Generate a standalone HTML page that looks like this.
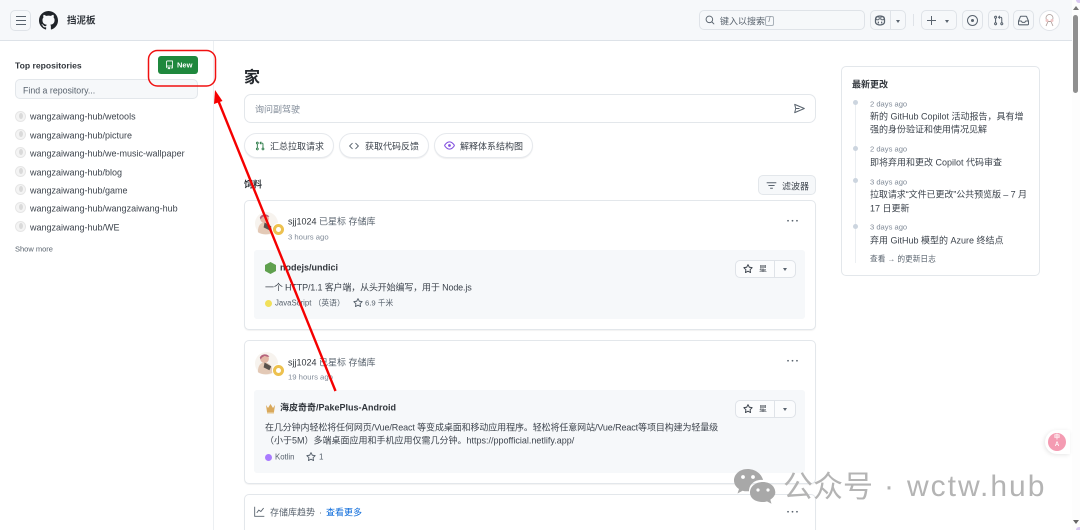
<!DOCTYPE html>
<html lang="zh"><head><meta charset="utf-8"><title>GitHub</title>
<style>
html,body{margin:0;padding:0;width:1080px;height:530px;overflow:hidden;background:#fff}
body{position:relative;font-family:"Liberation Sans","Noto Sans CJK SC",sans-serif;color:#1f2328;font-size:9px;filter:blur(.3px)}
.a{position:absolute;white-space:nowrap}
.t{position:absolute;white-space:nowrap;line-height:14px;transform:translateY(-6.5px)}
.b{position:absolute;box-sizing:border-box;border:1px solid #d9dee3;border-radius:5px}
svg{position:absolute;fill:currentColor;overflow:visible}
.m{color:#59636e}.g{color:#818b98}.k{color:#3d444d}
.card{position:absolute;box-sizing:border-box;left:244px;width:572px;border:1px solid #e3e7eb;border-radius:5px;box-shadow:0 1px 1px rgba(31,35,40,.06);background:#fff}
.inner{position:absolute;left:254px;width:551px;background:#f6f8fa;border-radius:3px}
.pill{position:absolute;box-sizing:border-box;top:133px;height:25px;border:1px solid #e6e9ed;border-radius:13px;box-shadow:0 1px 1px rgba(31,35,40,.07);background:#fff}
.fav{position:absolute;left:15px;width:11px;height:11px;border-radius:50%;background:#f4f4f4;border:1px solid #e6e6e6;box-sizing:border-box}
.fav:after{content:"";position:absolute;left:2.5px;top:1px;width:4px;height:6px;border-radius:50%;background:#dadada}
.dot{position:absolute;left:853px;width:5px;height:5px;border-radius:50%;background:#ccd5df}
.badge{position:absolute;width:11px;height:11px;border-radius:50%;background:#edc14f;border:1px solid #fff;box-sizing:content-box;margin:-1px}
.badge:after{content:"";position:absolute;left:3px;top:3px;width:5px;height:5px;background:#fff;border-radius:50%}
</style></head><body>
<svg width="0" height="0" style="position:absolute"><defs>
<symbol id="star" viewBox="0 0 16 16"><path d="M8 .25a.75.75 0 0 1 .673.418l1.882 3.815 4.21.612a.75.75 0 0 1 .416 1.279l-3.046 2.97.719 4.192a.751.751 0 0 1-1.088.791L8 12.347l-3.766 1.98a.75.75 0 0 1-1.088-.79l.72-4.194L.818 6.374a.75.75 0 0 1 .416-1.28l4.21-.611L7.327.668A.75.75 0 0 1 8 .25Zm0 2.445L6.615 5.5a.75.75 0 0 1-.564.41l-3.097.45 2.24 2.184a.75.75 0 0 1 .216.664l-.528 3.084 2.769-1.456a.75.75 0 0 1 .698 0l2.77 1.456-.53-3.084a.75.75 0 0 1 .216-.664l2.24-2.183-3.096-.45a.75.75 0 0 1-.564-.41L8 2.694Z"/></symbol>
<symbol id="pr" viewBox="0 0 16 16"><path d="M1.5 3.25a2.25 2.25 0 1 1 3 2.122v5.256a2.251 2.251 0 1 1-1.5 0V5.372A2.25 2.25 0 0 1 1.5 3.25Zm5.677-.177L9.573.677A.25.25 0 0 1 10 .854V2.5h1A2.5 2.5 0 0 1 13.5 5v5.628a2.251 2.251 0 1 1-1.5 0V5a1 1 0 0 0-1-1h-1v1.646a.25.25 0 0 1-.427.177L7.177 3.427a.25.25 0 0 1 0-.354ZM3.75 2.5a.75.75 0 1 0 0 1.5.75.75 0 0 0 0-1.5Zm0 9.5a.75.75 0 1 0 0 1.5.75.75 0 0 0 0-1.5Zm8.25.75a.75.75 0 1 0 1.5 0 .75.75 0 0 0-1.5 0Z"/></symbol>
<symbol id="avatar" viewBox="0 0 24 24"><circle cx="12" cy="12" r="12" fill="#f7f3ee"/><circle cx="10" cy="7" r="4.5" fill="#e3b8a6"/><path d="M5 6c1-4 8-5 10-1l-2 0-3-1-3 2-1 2Z" fill="#b5627c"/><path d="M3 21c0-7 3-10 7-10s8 3 9 10c-4 3-12 3-16 0Z" fill="#e3c9b6"/><path d="M10 11l7 4-2 4-6-3Z" fill="#5a524c"/></symbol>
<symbol id="dots" viewBox="0 0 16 4"><circle cx="2.500" cy="2" r="1.100"/><circle cx="8" cy="2" r="1.100"/><circle cx="13.500" cy="2" r="1.100"/></symbol>
</defs></svg>

<!-- header -->
<div class="a" style="left:0;top:0;width:1072px;height:41px;background:#f6f8fa;border-bottom:1px solid #dde2e8;box-sizing:border-box"></div>
<div class="b" style="left:10px;top:10px;width:21px;height:21px;border-color:#dfe3e8"></div>
<div class="a" style="left:15.5px;top:16px;width:10px;height:1.2px;background:#59636e;box-shadow:0 4px 0 #59636e,0 8px 0 #59636e"></div>
<svg style="left:39px;top:11px;color:#1f2328" width="19" height="19" viewBox="0 0 16 16"><path d="M8 0c4.42 0 8 3.58 8 8a8.013 8.013 0 0 1-5.45 7.59c-.4.08-.55-.17-.55-.38 0-.27.01-1.13.01-2.2 0-.75-.25-1.23-.54-1.48 1.78-.2 3.65-.88 3.65-3.95 0-.88-.31-1.59-.82-2.15.08-.2.36-1.02-.08-2.12 0 0-.67-.22-2.2.82-.64-.18-1.32-.27-2-.27-.68 0-1.36.09-2 .27-1.53-1.03-2.2-.82-2.2-.82-.44 1.1-.16 1.92-.08 2.12-.51.56-.82 1.28-.82 2.15 0 3.06 1.86 3.75 3.64 3.95-.23.2-.44.55-.51 1.07-.46.21-1.61.55-2.33-.66-.15-.24-.6-.83-1.23-.82-.67.01-.27.38.01.53.34.19.73.9.82 1.13.16.45.68 1.31 2.69.94 0 .67.01 1.3.01 1.49 0 .21-.15.45-.55.37A7.995 7.995 0 0 1 0 8c0-4.42 3.58-8 8-8Z"/></svg>
<div class="t" style="left:67px;top:20.500px;font-size:9.500px;font-weight:700;color:#31363c">挡泥板</div>

<div class="b" style="left:699px;top:10px;width:166px;height:20px;border-color:#dfe3e8"></div>
<svg style="left:705px;top:15px;color:#59636e" width="10" height="10" viewBox="0 0 16 16"><path d="M10.68 11.74a6 6 0 0 1-7.922-8.982 6 6 0 0 1 8.982 7.922l3.04 3.04a.749.749 0 0 1-.326 1.275.749.749 0 0 1-.734-.215ZM11.5 7a4.499 4.499 0 1 0-8.997 0A4.499 4.499 0 0 0 11.5 7Z"/></svg>
<div class="t m" style="left:720px;top:20.500px">键入以搜索</div>
<div class="a m" style="left:765px;top:16px;width:9px;height:10px;border:1px solid #aab2ba;border-radius:2px;box-sizing:border-box;font-size:7px;line-height:8px;text-align:center">/</div>

<div class="b" style="left:870px;top:10px;width:36px;height:20px;border-color:#dfe3e8"></div>
<div class="a" style="left:890px;top:10px;width:1px;height:20px;background:#dfe3e8"></div>
<svg style="left:874px;top:14.500px;color:#59636e" width="12" height="11" viewBox="0 0 16 14"><path d="M2 9V6c0-3 2-5 6-5s6 2 6 5v3c0 2.500-3 4-6 4S2 11.500 2 9Z" fill="none" stroke="currentColor" stroke-width="1.700"/><rect x="2.500" y="2" width="4.500" height="4" rx="1.500" fill="none" stroke="currentColor" stroke-width="1.300"/><rect x="9" y="2" width="4.500" height="4" rx="1.500" fill="none" stroke="currentColor" stroke-width="1.300"/><rect x="5" y="8.500" width="1.600" height="2.400"/><rect x="9.400" y="8.500" width="1.600" height="2.400"/></svg>
<div class="a" style="left:896px;top:19.500px;border:2.500px solid transparent;border-top:3px solid #59636e"></div>
<div class="a" style="left:913px;top:14px;width:1px;height:12px;background:#dfe3e8"></div>

<div class="b" style="left:921px;top:10px;width:36px;height:20px;border-color:#dfe3e8"></div>
<div class="a" style="left:927px;top:20px;width:9px;height:1.200px;background:#59636e"></div>
<div class="a" style="left:931px;top:16px;width:1.200px;height:9px;background:#59636e"></div>
<div class="a" style="left:945px;top:19.500px;border:2.500px solid transparent;border-top:3px solid #59636e"></div>

<div class="b" style="left:962px;top:10px;width:21px;height:20px;border-color:#dfe3e8"></div>
<div class="a" style="left:967px;top:15px;width:11px;height:11px;box-sizing:border-box;border:1.200px solid #59636e;border-radius:50%"></div>
<div class="a" style="left:971px;top:19px;width:3px;height:3px;background:#59636e;border-radius:50%"></div>
<div class="b" style="left:988px;top:10px;width:21px;height:20px;border-color:#dfe3e8"></div>
<svg style="left:993px;top:15px;color:#59636e" width="11" height="11"><use href="#pr"/></svg>
<div class="b" style="left:1013px;top:10px;width:21px;height:20px;border-color:#dfe3e8"></div>
<svg style="left:1018px;top:15px;color:#59636e" width="11" height="11" viewBox="0 0 16 16"><path d="M2.8 2.06A1.75 1.75 0 0 1 4.41 1h7.18c.7 0 1.333.417 1.61 1.06l2.74 6.395c.04.093.06.194.06.295v4.5A1.75 1.75 0 0 1 14.25 15H1.75A1.75 1.75 0 0 1 0 13.25v-4.5c0-.101.02-.202.06-.295Zm1.61.44a.25.25 0 0 0-.23.152L1.887 8H4.75a.75.75 0 0 1 .6.3L6.625 10h2.75l1.275-1.7a.75.75 0 0 1 .6-.3h2.863L11.82 2.652a.25.25 0 0 0-.23-.152Zm10.09 7h-2.875l-1.275 1.7a.75.75 0 0 1-.6.3h-3.5a.75.75 0 0 1-.6-.3L4.375 9.5H1.5v3.750c0 .138.112.25.25.25h12.5a.25.25 0 0 0 .25-.25Z"/></svg>
<svg style="left:1039px;top:10px" width="21" height="21" viewBox="0 0 21 21"><circle cx="10.500" cy="10.500" r="10" fill="#fff" stroke="#dfe3e8"/><circle cx="10.500" cy="8" r="3.500" fill="none" stroke="#a89a96" stroke-width=".8"/><path d="M7 16l2-4.500h3l2 4.500" fill="none" stroke="#a89a96" stroke-width=".8"/><circle cx="8" cy="10.500" r="1.500" fill="#f0c8c8"/><circle cx="13" cy="10.500" r="1.500" fill="#f0c8c8"/></svg>

<!-- sidebar -->
<div class="a" style="left:213px;top:41px;width:1px;height:489px;background:#eceff2"></div>
<div class="t" style="left:15px;top:65px;font-size:8.600px;font-weight:700;color:#31363c">Top repositories</div>
<div class="a" style="left:158px;top:56px;width:40px;height:18px;background:#1f883d;border-radius:3px"></div>
<svg style="left:165px;top:60px;color:#fff" width="9" height="10" viewBox="0 0 16 16"><path d="M2 2.500A2.500 2.500 0 0 1 4.500 0h8.750a.75.75 0 0 1 .75.75v12.500a.75.75 0 0 1-.75.75h-2.500a.75.75 0 0 1 0-1.500h1.750v-2h-8a1 1 0 0 0-.714 1.700.75.75 0 1 1-1.072 1.050A2.495 2.495 0 0 1 2 11.500Zm10.500-1h-8a1 1 0 0 0-1 1v6.708A2.486 2.486 0 0 1 4.500 9h8ZM5 12.250a.25.25 0 0 1 .25-.25h3.500a.25.25 0 0 1 .25.25v3.250a.25.25 0 0 1-.4.2l-1.450-1.087a.249.249 0 0 0-.3 0L5.400 15.700a.25.25 0 0 1-.4-.2Z"/></svg>
<div class="t" style="left:177px;top:64.500px;font-size:7.500px;font-weight:700;color:#fff">New</div>
<div class="b" style="left:15px;top:79px;width:183px;height:20px;background:#f6f8fa;border-color:#e3e7eb"></div>
<div class="t m" style="left:23px;top:89.500px;font-size:8.800px">Find a repository...</div>

<div class="fav" style="top:110.500px"></div><div class="t k" style="left:30px;top:116px">wangzaiwang-hub/wetools</div>
<div class="fav" style="top:128.500px"></div><div class="t k" style="left:30px;top:134.500px">wangzaiwang-hub/picture</div>
<div class="fav" style="top:147px"></div><div class="t k" style="left:30px;top:153px">wangzaiwang-hub/we-music-wallpaper</div>
<div class="fav" style="top:165.500px"></div><div class="t k" style="left:30px;top:171.500px">wangzaiwang-hub/blog</div>
<div class="fav" style="top:184px"></div><div class="t k" style="left:30px;top:190px">wangzaiwang-hub/game</div>
<div class="fav" style="top:202px"></div><div class="t k" style="left:30px;top:208px">wangzaiwang-hub/wangzaiwang-hub</div>
<div class="fav" style="top:220.500px"></div><div class="t k" style="left:30px;top:226.500px">wangzaiwang-hub/WE</div>
<div class="t m" style="left:15px;top:249px;font-size:7.500px">Show more</div>

<!-- main top -->
<div class="t" style="left:244px;top:78px;font-size:16px;font-weight:700;color:#262a2f">家</div>
<div class="b" style="left:244px;top:94px;width:572px;height:29px;border-color:#e3e7eb;border-radius:7px"></div>
<div class="t g" style="left:255px;top:108.500px">询问副驾驶</div>
<svg style="left:794px;top:103px;color:#59636e" width="11" height="11" viewBox="0 0 16 16"><path d="M1 2l14 6-14 6 1.500-6L1 2Zm1.500 6H8" fill="none" stroke="currentColor" stroke-width="1.400" stroke-linejoin="round"/></svg>

<div class="pill" style="left:244px;width:90px"></div>
<svg style="left:255px;top:141px;color:#2f7d4a" width="10" height="10"><use href="#pr"/></svg>
<div class="t k" style="left:270px;top:145.500px">汇总拉取请求</div>
<div class="pill" style="left:339px;width:90px"></div>
<svg style="left:349px;top:141px;color:#59636e" width="10" height="10" viewBox="0 0 16 16"><path d="m11.280 3.220 4.250 4.250a.75.75 0 0 1 0 1.060l-4.250 4.250a.749.749 0 0 1-1.275-.326.749.749 0 0 1 .215-.734L13.940 8l-3.720-3.720a.749.749 0 0 1 .326-1.275.749.749 0 0 1 .734.215Zm-6.560 0a.751.751 0 0 1 1.042.018.751.751 0 0 1 .018 1.042L2.060 8l3.720 3.720a.749.749 0 0 1-.326 1.275.749.749 0 0 1-.734-.215L.470 8.530a.75.75 0 0 1 0-1.060Z"/></svg>
<div class="t k" style="left:365px;top:145.500px">获取代码反馈</div>
<div class="pill" style="left:434px;width:99px"></div>
<svg style="left:444px;top:140px;color:#8250df" width="11" height="11" viewBox="0 0 16 16"><path d="M8 2c1.981 0 3.671.992 4.933 2.078 1.270 1.091 2.187 2.345 2.637 3.023a1.620 1.620 0 0 1 0 1.798c-.45.678-1.367 1.932-2.637 3.023C11.670 13.008 9.981 14 8 14c-1.981 0-3.671-.992-4.933-2.078C1.797 10.830.88 9.576.43 8.898a1.620 1.620 0 0 1 0-1.798c.45-.677 1.367-1.931 2.637-3.022C4.330 2.992 6.019 2 8 2ZM1.679 7.932a.12.12 0 0 0 0 .136c.411.622 1.241 1.750 2.366 2.717C5.176 11.758 6.527 12.500 8 12.500c1.473 0 2.825-.742 3.955-1.715 1.124-.967 1.954-2.096 2.366-2.717a.12.12 0 0 0 0-.136c-.412-.621-1.242-1.750-2.366-2.717C10.824 4.242 9.473 3.500 8 3.500c-1.473 0-2.825.742-3.955 1.715-1.124.967-1.954 2.096-2.366 2.717ZM8 10a2 2 0 1 1-.001-3.999A2 2 0 0 1 8 10Z"/></svg>
<div class="t k" style="left:460px;top:145.500px">解释体系结构图</div>

<div class="t" style="left:244px;top:184px;font-weight:700;color:#31363c">饲料</div>
<div class="b" style="left:758px;top:175px;width:58px;height:20px;background:#f6f8fa;border-color:#e3e7eb"></div>
<svg style="left:766px;top:180px;color:#59636e" width="11" height="11" viewBox="0 0 16 16"><path d="M1 4h14M3.500 8h9M6 12h4" stroke="currentColor" stroke-width="1.300" fill="none"/></svg>
<div class="t k" style="left:782px;top:185.500px">滤波器</div>

<!-- card 1 -->
<div class="card" style="top:200px;height:130px"></div>
<svg style="left:255px;top:212px" width="23" height="23"><use href="#avatar"/></svg>
<div class="badge" style="left:273px;top:224px"></div>
<div class="t" style="left:288px;top:220.500px;color:#31363c">sjj1024 <span class="m">已星标 存储库</span></div>
<div class="t g" style="left:288px;top:236.500px;font-size:7.700px">3 hours ago</div>
<svg style="left:786px;top:219px;color:#59636e" width="13" height="3.500"><use href="#dots"/></svg>
<div class="inner" style="top:250px;height:69px"></div>
<svg style="left:265px;top:262px" width="11" height="12" viewBox="0 0 11 12"><path d="M5.500 0l5.500 3v6l-5.500 3L0 9V3Z" fill="#5fa04e"/></svg>
<div class="t" style="left:280px;top:267px;font-weight:700;color:#31363c">nodejs/undici</div>
<div class="t k" style="left:265px;top:286.500px;letter-spacing:-.15px">一个 HTTP/1.1 客户端，从头开始编写，用于 Node.js</div>
<div class="a" style="left:265px;top:299.500px;width:7px;height:7px;border-radius:50%;background:#f1e05a"></div>
<div class="t m" style="left:275px;top:303px;font-size:7.800px">JavaScript （英语）</div>
<svg style="left:353px;top:298px;color:#59636e" width="10" height="10"><use href="#star"/></svg>
<div class="t m" style="left:365px;top:303px;font-size:7.700px">6.9 千米</div>
<div class="b" style="left:735px;top:260px;width:61px;height:18px;background:#fbfcfd;border-color:#dfe3e8"></div>
<div class="a" style="left:774px;top:260px;width:1px;height:18px;background:#dfe3e8"></div>
<svg style="left:743px;top:264px;color:#3d444d" width="10" height="10"><use href="#star"/></svg>
<div class="t k" style="left:759px;top:269px;font-size:8px">星</div>
<div class="a" style="left:783px;top:268px;border:2.500px solid transparent;border-top:3px solid #59636e"></div>

<!-- card 2 -->
<div class="card" style="top:340px;height:144px"></div>
<svg style="left:255px;top:352px" width="23" height="23"><use href="#avatar"/></svg>
<div class="badge" style="left:273px;top:365px"></div>
<div class="t" style="left:288px;top:361.500px;color:#31363c">sjj1024 <span class="m">已星标 存储库</span></div>
<div class="t g" style="left:288px;top:377px;font-size:7.700px">19 hours ago</div>
<svg style="left:786px;top:359px;color:#59636e" width="13" height="3.500"><use href="#dots"/></svg>
<div class="inner" style="top:390px;height:83px"></div>
<svg style="left:265px;top:402px" width="11" height="12" viewBox="0 0 11 12"><path d="M1 3l2 3 2.500-4L8 6l2-3-1 7H2Z" fill="#d9a95c"/><rect x="2" y="10" width="7" height="1.500" fill="#e4c48c"/></svg>
<div class="t" style="left:280px;top:407px;font-weight:700;color:#31363c">海皮奇奇/PakePlus-Android</div>
<div class="t k" style="left:265px;top:426.500px;letter-spacing:-.11px">在几分钟内轻松将任何网页/Vue/React 等变成桌面和移动应用程序。轻松将任意网站/Vue/React等项目构建为轻量级</div>
<div class="t k" style="left:265px;top:440px">（小于5M）多端桌面应用和手机应用仅需几分钟。https://ppofficial.netlify.app/</div>
<div class="a" style="left:265px;top:453.500px;width:7px;height:7px;border-radius:50%;background:#a97bff"></div>
<div class="t m" style="left:275px;top:457px;font-size:7.800px">Kotlin</div>
<svg style="left:306px;top:452px;color:#59636e" width="10" height="10"><use href="#star"/></svg>
<div class="t m" style="left:319px;top:457px;font-size:8px">1</div>
<div class="b" style="left:735px;top:400px;width:61px;height:18px;background:#fbfcfd;border-color:#dfe3e8"></div>
<div class="a" style="left:774px;top:400px;width:1px;height:18px;background:#dfe3e8"></div>
<svg style="left:743px;top:404px;color:#3d444d" width="10" height="10"><use href="#star"/></svg>
<div class="t k" style="left:759px;top:409px;font-size:8px">星</div>
<div class="a" style="left:783px;top:408px;border:2.500px solid transparent;border-top:3px solid #59636e"></div>

<!-- card 3 -->
<div class="card" style="top:494px;height:60px"></div>
<svg style="left:254px;top:506px;color:#59636e" width="11" height="11" viewBox="0 0 16 16"><path d="M1 1v14h14M4 10l3-4 3 2 4-5" fill="none" stroke="currentColor" stroke-width="1.300"/></svg>
<div class="t m" style="left:270px;top:512px">存储库趋势</div>
<div class="t m" style="left:319px;top:512px">·</div>
<div class="t" style="left:326px;top:512px;color:#0969da">查看更多</div>
<svg style="left:786px;top:510px;color:#59636e" width="13" height="3.500"><use href="#dots"/></svg>

<!-- changelog -->
<div class="b" style="left:841px;top:66px;width:199px;height:210px;border-color:#e3e7eb"></div>
<div class="t" style="left:852px;top:83.500px;font-weight:700;color:#31363c">最新更改</div>
<div class="a" style="left:854.500px;top:102px;width:1.500px;height:161px;background:#eceff2"></div>
<div class="dot" style="top:100px"></div><div class="dot" style="top:146px"></div><div class="dot" style="top:178px"></div><div class="dot" style="top:224px"></div>
<div class="t g" style="left:870px;top:103.500px;font-size:7.600px">2 days ago</div>
<div class="t k" style="left:870px;top:116px">新的 GitHub Copilot 活动报告，具有增</div>
<div class="t k" style="left:870px;top:129px">强的身份验证和使用情况见解</div>
<div class="t g" style="left:870px;top:149px;font-size:7.600px">2 days ago</div>
<div class="t k" style="left:870px;top:161.500px">即将弃用和更改 Copilot 代码审查</div>
<div class="t g" style="left:870px;top:181.500px;font-size:7.600px">3 days ago</div>
<div class="t k" style="left:870px;top:194px;letter-spacing:-.07px">拉取请求“文件已更改”公共预览版 – 7 月</div>
<div class="t k" style="left:870px;top:207.500px">17 日更新</div>
<div class="t g" style="left:870px;top:227px;font-size:7.600px">3 days ago</div>
<div class="t k" style="left:870px;top:240px">弃用 GitHub 模型的 Azure 终结点</div>
<div class="t m" style="left:870px;top:258.500px;font-size:7.700px">查看 → 的更新日志</div>

<!-- scrollbar -->
<div class="a" style="left:1072px;top:0;width:8px;height:530px;background:#fdfdfd"></div>
<div class="a" style="left:1073px;top:15px;width:5px;height:78px;background:#8f8f8f;border-radius:3px"></div>
<div class="a" style="left:1072.500px;top:6px;border:3px solid transparent;border-bottom:4px solid #777;border-top:0"></div>
<div class="a" style="left:1072.500px;top:520px;border:3px solid transparent;border-top:4px solid #666;border-bottom:0"></div>
<div class="a" style="left:1076px;top:0;width:4px;height:3px;background:#d9c8f2;border-radius:0 0 0 4px"></div>
<div class="a" style="left:1076px;top:527px;width:4px;height:3px;background:#d9c8f2;border-radius:4px 0 0 0"></div>

<!-- translate widget -->
<div class="a" style="left:1045px;top:430px;width:25px;height:24px;background:#fff;border-radius:12px 0 0 12px;box-shadow:-1px 1px 4px rgba(0,0,0,.1)"></div>
<div class="a" style="left:1048px;top:433px;width:18px;height:18px;border-radius:50%;background:#f49bb2;color:#fff;font-size:6px;line-height:7px;font-weight:700;text-align:center;padding-top:2px;box-sizing:border-box">中<br>A</div>

<!-- annotation -->
<svg style="left:0;top:0" width="1080" height="530" viewBox="0 0 1080 530">
<rect x="148.500" y="50.500" width="67" height="35.500" rx="9" fill="none" stroke="#f01010" stroke-width="1.500"/>
<path d="M335.500 391L218 100" stroke="#f50000" stroke-width="2.400" fill="none"/>
<path d="M215 90L222.500 101L214 104Z" fill="#f50000"/>
</svg>

<!-- watermark -->
<svg style="left:733px;top:468px" width="44" height="36" viewBox="0 0 44 36"><path d="M14.500 1C6.500 1 1 6.500 1 12.500c0 3.500 2 6.500 5 8.500l-1.500 4.500 5-2.800c1.500.4 3 .6 4.500.6l2 0C16 15.500 23 11 30 12 28.500 5.500 22 1 14.500 1Z" fill="#a8a8a8"/><circle cx="10" cy="9" r="1.900" fill="#fff"/><circle cx="20" cy="9" r="1.900" fill="#fff"/><path d="M30 14C22.500 14 17 18.500 17 24.500S22.500 34 30 34c1.500 0 2.700-.2 4-.6l4.500 2.300-1.200-4c3-2 5-4.500 5-7.200C42.300 18.500 37 14 30 14Z" fill="#a8a8a8"/><circle cx="25" cy="22" r="1.600" fill="#fff"/><circle cx="35" cy="22" r="1.600" fill="#fff"/></svg>
<div class="a" style="left:783px;top:468px;font-size:30px;line-height:40px;color:#b4b4b4">公众号</div>
<div class="a" style="left:884px;top:467px;font-size:30px;line-height:40px;color:#b4b4b4">·</div>
<div class="a" style="left:907px;top:467px;font-size:30px;line-height:40px;color:#b4b4b4;letter-spacing:2px">wctw.hub</div>
</body></html>
